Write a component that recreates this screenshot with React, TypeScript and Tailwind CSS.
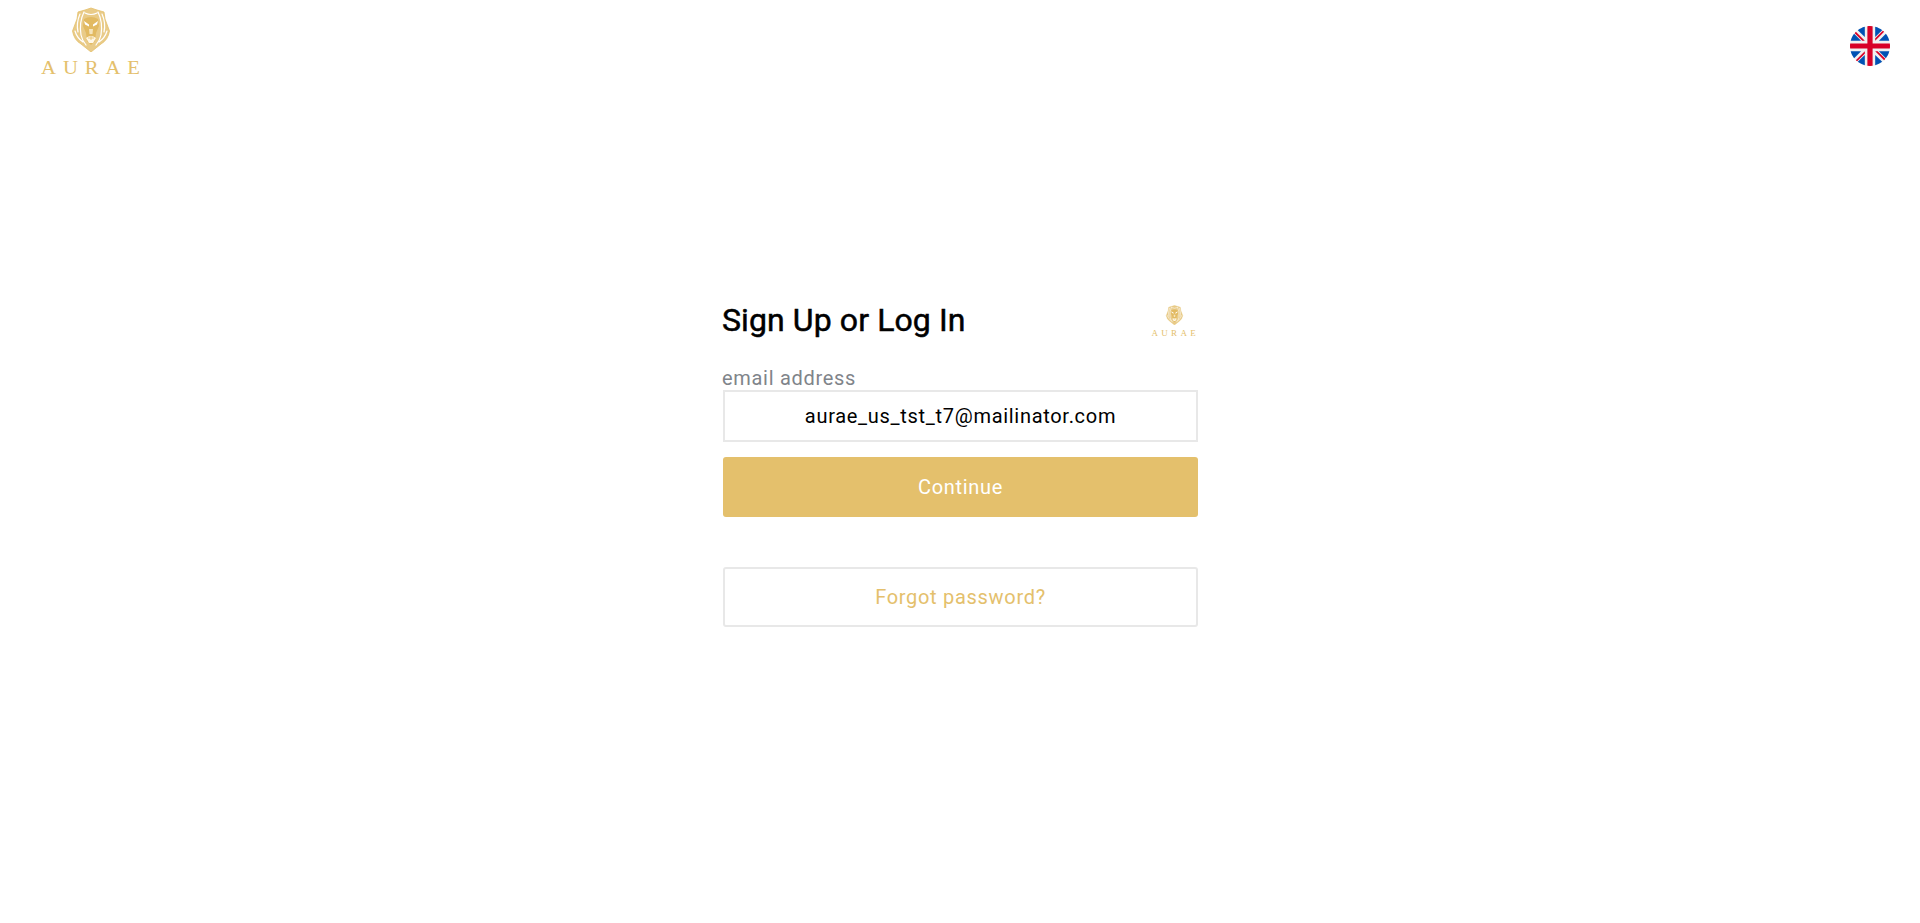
const GOLD = "#e4c06c";

function LionMark({ className }: { className: string }) {
  return (
    <svg className={className} viewBox="0 0 38 45" fill="none">
      {/* Shield */}
      <path
        d="M6 5 L13 3 L19 1 L25 3 L32 5 L33 12 L37.5 24 Q36 33 29 37 L19 45 L9 37 Q2 33 0.5 24 L5 12 Z"
        fill="#e9cb88"
        stroke={GOLD}
        strokeWidth="0.8"
      />
      {/* Mane */}
      <path
        d="M8 7 Q4 16 6 25 M12 5 Q7 15 9 28 Q10 33 14 38 M30 7 Q34 16 32 25 M26 5 Q31 15 29 28 Q28 33 24 38 M13 6 Q19 9 25 6 M3 24 Q5 31 11 35 M35 24 Q33 31 27 35"
        stroke="#ffffff"
        strokeWidth="1.2"
        strokeLinecap="round"
      />
      {/* Face */}
      <path
        d="M12 12 Q19 8 26 12 L27 19 L24 26 L23 34 L19 38 L15 34 L14 26 L11 19 Z"
        fill="#e2ba62"
      />
      <path d="M12 14 L17 17.5 L17 19.5 L13 17.5 Z M26 14 L21 17.5 L21 19.5 L25 17.5 Z" fill="#ffffff" />
      <path d="M17 22 L21 22 L20.5 27 L17.5 27 Z" fill="#f5e4bb" />
      <path d="M14 31 Q19 27 24 31 L21 36 L17 36 Z" fill="#fff7e6" />
      <path d="M19 27 L19 33 M16 31 L22 31" stroke={GOLD} strokeWidth="0.8" />
    </svg>
  );
}

function FlagUK() {
  return (
    <svg className="w-10 h-10" viewBox="0 0 512 512">
      <circle cx="256" cy="256" r="256" fill="#f0f0f0" />
      <g fill="#0052b4">
        <path d="M52.92 100.142c-20.109 26.163-35.272 56.318-44.101 89.077h133.178z" />
        <path d="M503.181 189.219c-8.829-32.758-23.993-62.913-44.101-89.076l-89.075 89.076z" />
        <path d="M8.819 322.784c8.83 32.758 23.993 62.913 44.101 89.075l89.074-89.075z" />
        <path d="M411.858 52.921c-26.163-20.109-56.317-35.272-89.076-44.102v133.177z" />
        <path d="M100.142 459.079c26.163 20.109 56.318 35.272 89.076 44.102V370.005z" />
        <path d="M189.217 8.819c-32.758 8.83-62.913 23.993-89.075 44.101l89.075 89.075z" />
        <path d="M322.783 503.181c32.758-8.83 62.913-23.993 89.075-44.101l-89.075-89.075z" />
        <path d="M370.005 322.784l89.075 89.076c20.108-26.162 35.272-56.318 44.101-89.076z" />
      </g>
      <g fill="#d80027">
        <path d="M509.833 222.609H289.392V2.167A258.556 258.556 0 00256 0c-11.319 0-22.461.744-33.391 2.167v220.441H2.167A258.556 258.556 0 000 256c0 11.319.744 22.461 2.167 33.391h220.441v220.442a258.35 258.35 0 0066.783 0V289.392h220.442A258.533 258.533 0 00512 256c0-11.317-.744-22.461-2.167-33.391z" />
        <path d="M322.783 322.784L437.019 437.02a256.636 256.636 0 0015.048-16.435l-97.802-97.802h-31.482z" />
        <path d="M189.217 322.784h-.002L74.98 437.019a256.636 256.636 0 0016.435 15.048l97.802-97.804v-31.479z" />
        <path d="M189.217 189.219v-.002L74.981 74.98a256.636 256.636 0 00-15.048 16.435l97.803 97.803h31.481z" />
        <path d="M322.783 189.219L437.02 74.981a256.328 256.328 0 00-16.435-15.047l-97.802 97.803z" />
      </g>
    </svg>
  );
}

export default function App() {
  return (
    <div className="min-h-screen bg-white font-['Roboto',sans-serif]">
      {/* Top bar */}
      <header className="flex justify-between items-start h-[293px] pl-[39px] pr-[30px]">
        <div className="flex flex-col items-center w-[103px] pt-[7px]">
          <LionMark className="w-[38px] h-[45px]" />
          <span className="mt-[7px] ml-[6px] origin-center scale-x-[1.15] font-['Liberation_Serif',serif] text-[18px] leading-[18px] tracking-[6px] text-[#e4c06c] whitespace-nowrap">
            AURAE
          </span>
        </div>
        <div className="mt-[26px]">
          <FlagUK />
        </div>
      </header>

      {/* Login card */}
      <main className="w-[475px] ml-[723px]">
        <div className="flex justify-between items-start">
          <h1 className="text-[32px] leading-[54px] font-normal tracking-[0.1px] -ml-px text-black [-webkit-text-stroke:0.5px_black]">
            Sign Up or Log In
          </h1>
          <div className="flex flex-col items-center w-[47px] pt-[12px]">
            <LionMark className="w-[19px] h-[20px]" />
            <span className="mt-[5px] ml-[2px] origin-center scale-x-[1.12] font-['Liberation_Serif',serif] text-[8px] leading-[8px] tracking-[3px] text-[#e4c06c] whitespace-nowrap">
              AURAE
            </span>
          </div>
        </div>
        <label className="block mt-[20px] -ml-px text-[20px] leading-[23px] tracking-[0.7px] text-[#80848a]">
          email address
        </label>
        <div className="flex items-center justify-center h-[52px] border-2 border-[#e8e8e8] text-[20px] tracking-[0.7px] text-black">
          aurae_us_tst_t7@mailinator.com
        </div>
        <button className="block w-full h-[60px] mt-[15px] rounded-[3px] bg-[#e4c06c] text-[20px] tracking-[0.7px] text-white">
          Continue
        </button>
        <button className="block w-full h-[60px] mt-[50px] rounded-[3px] border-2 border-[#e8e8e8] bg-white text-[20px] tracking-[0.7px] text-[#e4c06c]">
          Forgot password?
        </button>
      </main>
    </div>
  );
}
